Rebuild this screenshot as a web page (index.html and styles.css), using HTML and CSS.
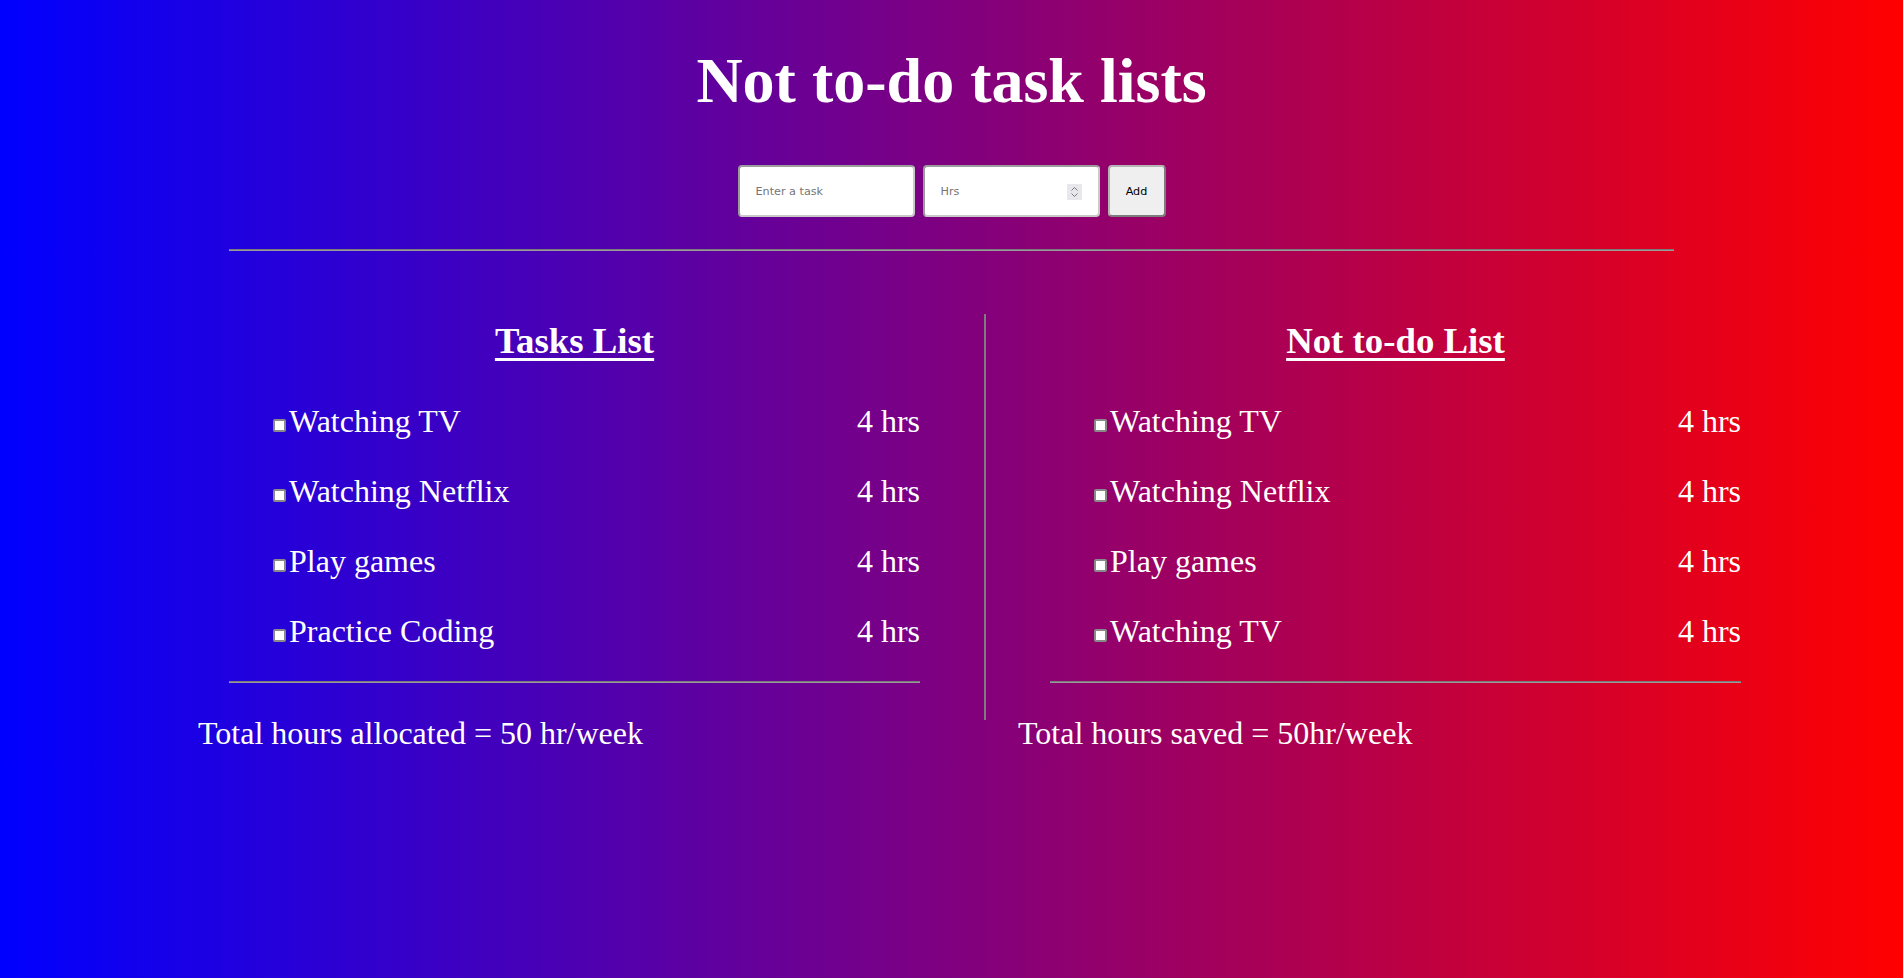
FILE: index.html
```html
<!DOCTYPE html>
<html lang="en">
<head>
<meta charset="utf-8">
<title>Not to-do task lists</title>
<link rel="stylesheet" href="styles.css">
</head>
<body>
  <h1 class="title">Not to-do task lists</h1>

  <form class="entry">
    <input class="field" type="text" placeholder="Enter a task">
    <div class="field num-field">
      <input class="num-input" type="text" inputmode="numeric" placeholder="Hrs">
      <span class="spin" aria-hidden="true">
        <svg width="15" height="16" viewBox="0 0 15 16">
          <path d="M4.5 6.5 L7.5 3.5 L10.5 6.5" fill="none" stroke="#7a7a7a" stroke-width="1"/>
          <path d="M4.5 9.5 L7.5 12.5 L10.5 9.5" fill="none" stroke="#7a7a7a" stroke-width="1"/>
        </svg>
      </span>
    </div>
    <button class="add-btn" type="button">Add</button>
  </form>

  <hr class="top-rule">

  <div class="lists">
    <section class="col">
      <div class="block">
        <h2 class="list-title">Tasks List</h2>
        <ul class="items">
          <li class="item"><span class="name"><input class="check" type="checkbox">Watching TV</span><span class="hrs">4 hrs</span></li>
          <li class="item"><span class="name"><input class="check" type="checkbox">Watching Netflix</span><span class="hrs">4 hrs</span></li>
          <li class="item"><span class="name"><input class="check" type="checkbox">Play games</span><span class="hrs">4 hrs</span></li>
          <li class="item"><span class="name"><input class="check" type="checkbox">Practice Coding</span><span class="hrs">4 hrs</span></li>
        </ul>
        <hr class="list-rule">
      </div>
      <p class="total">Total hours allocated = 50 hr/week</p>
    </section>

    <div class="divider"></div>

    <section class="col">
      <div class="block">
        <h2 class="list-title">Not to-do List</h2>
        <ul class="items">
          <li class="item"><span class="name"><input class="check" type="checkbox">Watching TV</span><span class="hrs">4 hrs</span></li>
          <li class="item"><span class="name"><input class="check" type="checkbox">Watching Netflix</span><span class="hrs">4 hrs</span></li>
          <li class="item"><span class="name"><input class="check" type="checkbox">Play games</span><span class="hrs">4 hrs</span></li>
          <li class="item"><span class="name"><input class="check" type="checkbox">Watching TV</span><span class="hrs">4 hrs</span></li>
        </ul>
        <hr class="list-rule">
      </div>
      <p class="total">Total hours saved = 50hr/week</p>
    </section>
  </div>
</body>
</html>
```

FILE: styles.css
```css
html {
  background: linear-gradient(to right, #0000ff, #ff0000);
  min-height: 100%;
}

body {
  margin: 0;
  min-height: 100vh;
  font-family: "Liberation Serif", "Times New Roman", serif;
  color: #ffffff;
}

.title {
  margin: 44px 0 0;
  font-size: 64px;
  line-height: 74px;
  font-weight: bold;
  text-align: center;
}

.entry {
  display: flex;
  justify-content: center;
  gap: 8px;
  margin: 47px 0 0;
}

.field {
  box-sizing: border-box;
  width: 177px;
  height: 52px;
  padding: 0 16px;
  border: 2px solid #9c9c9c;
  border-bottom-color: #c9c9c9;
  border-right-color: #c9c9c9;
  border-radius: 4px;
  background: #ffffff;
  font-family: "DejaVu Sans", sans-serif;
  font-size: 11.2px;
  color: #000;
  outline: none;
}

.field::placeholder,
.num-input::placeholder {
  color: #757575;
}

.num-field {
  display: flex;
  align-items: center;
}

.num-input {
  flex: 1;
  min-width: 0;
  height: 100%;
  padding: 0;
  border: 0;
  background: transparent;
  font: inherit;
  color: #000;
  outline: none;
}

.spin {
  display: flex;
  width: 15px;
  height: 16px;
  margin-top: 1px;
  background: #e8e8ec;
}

.add-btn {
  box-sizing: border-box;
  width: 58px;
  height: 52px;
  padding: 0;
  border: 2px solid #b5b5b5;
  border-bottom-color: #7d7d7d;
  border-right-color: #7d7d7d;
  border-radius: 4px;
  background: #efefef;
  font-family: "DejaVu Sans", sans-serif;
  font-size: 11.2px;
  color: #000;
}

.top-rule {
  width: 1445px;
  margin: 32px auto 0;
  height: 0;
  border: 0;
  border-top: 1px solid #7a7a7a;
  border-bottom: 1px solid #9a9a9a;
}

.lists {
  display: flex;
  align-items: flex-start;
  margin: 63px 0 0 166px;
}

.col {
  width: 818px;
  padding-left: 32px;
  box-sizing: border-box;
}

.divider {
  width: 0;
  height: 406px;
  border-left: 2px solid #7d7d7d;
}

.block {
  width: 691px;
  margin-left: 32px;
}

.col:first-child .block {
  margin-left: 31px;
}

.list-title {
  margin: 5px 0 0;
  font-size: 36.8px;
  font-weight: bold;
  text-align: center;
  text-decoration: underline;
  text-decoration-thickness: 3px;
  text-underline-offset: 5px;
}

.items {
  list-style: none;
  margin: 24px 0 0;
  padding: 0 0 0 40px;
}

.item {
  display: flex;
  justify-content: space-between;
  font-size: 32px;
  line-height: 70px;
}

.check {
  appearance: none;
  -webkit-appearance: none;
  box-sizing: border-box;
  width: 13px;
  height: 13px;
  margin: 3px 3px 3px 4px;
  border: 2px solid #8a8a8a;
  border-radius: 2px;
  background: #ffffff;
  vertical-align: -3px;
}

.list-rule {
  margin: 14.5px 0 0;
  height: 0;
  border: 0;
  border-top: 1px solid #7a7a7a;
  border-bottom: 1px solid #9a9a9a;
}

.total {
  margin: 32.5px 0 0;
  font-size: 32px;
}
```
